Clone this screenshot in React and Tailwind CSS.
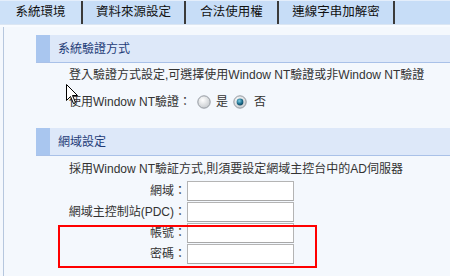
import React from 'react';

const tabs = [
  { label: '系統環境', w: 'w-[83px]', active: true },
  { label: '資料來源設定', w: 'w-[103px]' },
  { label: '合法使用權', w: 'w-[93px]' },
  { label: '連線字串加解密', w: 'w-[116px]' },
];

const Radio = ({ checked }) => (
  <svg width="14" height="14" viewBox="0 0 14 14" className="mx-[3px] shrink-0">
    <defs>
      <radialGradient id={checked ? 'rc' : 'ru'} cx="40%" cy="35%" r="70%">
        <stop offset="0%" stopColor="#ffffff" />
        <stop offset="100%" stopColor="#c4c8cc" />
      </radialGradient>
      <radialGradient id="dot" cx="40%" cy="35%" r="70%">
        <stop offset="0%" stopColor="#7fd0e8" />
        <stop offset="60%" stopColor="#1e6f8e" />
        <stop offset="100%" stopColor="#0d3f58" />
      </radialGradient>
    </defs>
    <circle cx="7" cy="7" r="6.2" fill={`url(#${checked ? 'rc' : 'ru'})`} stroke="#8c9298" strokeWidth="0.9" />
    {checked && <circle cx="7" cy="7" r="3.4" fill="url(#dot)" />}
  </svg>
);

const SectionHeader = ({ children }) => (
  <div className="ml-[32px] h-[28px] flex bg-[#dde8f9] border-b border-[#a9c1e8]">
    <div className="w-[14px] bg-[#a9c6ef]" />
    <div className="pl-[8px] flex items-center text-[#1f3c78]">{children}</div>
  </div>
);

const Field = ({ label }) => (
  <div className="h-[21px] flex items-start">
    <div className="w-[154px] text-right leading-[20px]">{label}</div>
    <div className="ml-[1px] w-[107px] h-[20px] bg-white border border-[#b4b4b4] border-b-[#a8a8a8]" />
  </div>
);

export default function App() {
  return (
    <div
      className="relative w-[450px] h-[276px] overflow-hidden bg-[#f4f8fd] text-[12px] text-[#333]"
      style={{ fontFamily: '"Liberation Sans", "Noto Sans CJK TC", sans-serif' }}
    >
      {/* tab bar */}
      <div className="h-[24px] flex bg-[#c7ddf7] border-t border-[#e4eefb]">
        {tabs.map((t) => (
          <div
            key={t.label}
            className={`${t.w} h-full flex items-center justify-center border-r-2 border-[#3a3a3a] text-[#111] text-[12.5px] ${t.active ? 'bg-[#cde1f8]' : ''}`}
          >
            {t.label}
          </div>
        ))}
      </div>
      <div className="h-[3px] bg-[#f8fbff] border-t border-[#dbe6f3]" />

      <div className="ml-[3px] border-l border-[#b6c7de] h-[249px] pt-[8px]">
        <SectionHeader>系統驗證方式</SectionHeader>
        <div className="pl-[65px]">
          <div className="h-[22px] mt-[1px] leading-[22px]">
            登入驗證方式設定,可選擇使用Window NT驗證或非Window NT驗證
          </div>
          <div className="h-[22px] mt-[5px] flex items-center">
            <span>使用Window NT驗證：</span>
            <span className="ml-[3px]" />
            <Radio />
            <span className="ml-[2px]">是</span>
            <span className="ml-[2px]" />
            <Radio checked />
            <span className="ml-[4px]">否</span>
          </div>
        </div>

        <div className="mt-[15px]">
          <SectionHeader>網域設定</SectionHeader>
        </div>
        <div className="pl-[65px] h-[22px] mt-[2px] leading-[22px]">
          採用Window NT驗証方式,則須要設定網域主控台中的AD伺服器
        </div>
        <div className="pl-[28px] mt-[1px]">
          <Field label="網域：" />
          <Field label="網域主控制站(PDC)：" />
          <Field label="帳號：" />
          <Field label="密碼：" />
        </div>
      </div>

      {/* annotation box */}
      <div className="absolute left-[58px] top-[225px] w-[259px] h-[43px] border-2 border-[#ff0000]" />

      {/* mouse cursor */}
      <svg className="absolute left-[66px] top-[84px]" width="13" height="21" viewBox="0 0 13 21">
        <path d="M0.5 0.5 L0.5 16.5 L4.5 12.5 L7.5 19.5 L9.5 18.5 L6.5 11.5 L11.5 11.5 Z" fill="#fff" stroke="#000" strokeWidth="1" />
      </svg>
    </div>
  );
}
